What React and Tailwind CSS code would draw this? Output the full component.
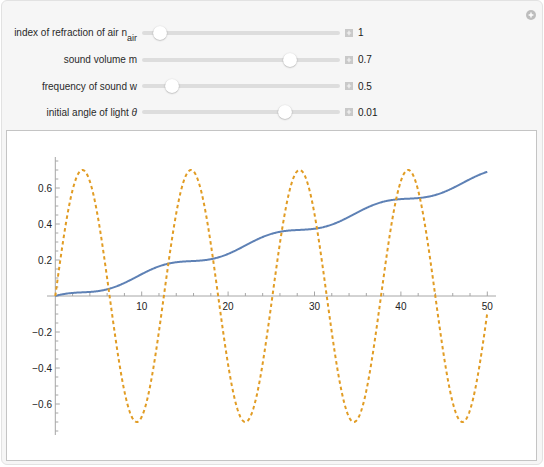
import React from "react";

const FONT = { fontFamily: '"Liberation Sans", Arial, sans-serif' };

function PlusSquare() {
  return (
    <div className="w-[8px] h-[8px] bg-[#c9c9c9] flex items-center justify-center">
      <svg width="8" height="8" viewBox="0 0 8 8">
        <path d="M4 1.8V6.2M1.8 4H6.2" stroke="#f4f4f4" strokeWidth="1.2" />
      </svg>
    </div>
  );
}

function Row({ label, value, thumb, h }) {
  return (
    <div className={`flex items-center pl-[9px] ${h}`}>
      <div className="w-[126px] text-right text-[10px] text-[#2a2a2a] whitespace-nowrap">{label}</div>
      <div className="relative ml-[5px] w-[198px] h-[4px] bg-[#dddddd] rounded-full">
        <div
          className="absolute top-[-5px] w-[14px] h-[14px] rounded-full bg-white shadow-[0_0.5px_1.5px_rgba(0,0,0,0.35)]"
          style={{ left: thumb - 7 }}
        />
      </div>
      <div className="ml-[5px]">
        <PlusSquare />
      </div>
      <div className="ml-[5px] text-[10px] text-[#1a1a1a]">{value}</div>
    </div>
  );
}

const X0 = 48.3;
const SX = 8.64;
const Y0 = 165;
const SY = 180;
const px = (x) => X0 + SX * x;
const py = (y) => Y0 - SY * y;

function buildPath(f, a, b, n) {
  let d = "";
  for (let i = 0; i <= n; i++) {
    const x = a + ((b - a) * i) / n;
    d += (i === 0 ? "M" : "L") + px(x).toFixed(2) + " " + py(f(x)).toFixed(2);
  }
  return d;
}

function Plot() {
  const orange = buildPath((x) => 0.7 * Math.sin(0.5 * x), 0, 50, 600);
  const a = 0.0138;
  const c = 0.0115;
  const blue = buildPath((x) => a * x + 2 * c * (Math.cos(0.5 * x) - 1), 0, 50, 600);
  const axis = "#a6a6a6";
  const xt = [];
  for (let v = 2; v <= 50; v += 2) {
    const major = v % 10 === 0;
    xt.push(
      <line key={"x" + v} x1={px(v)} x2={px(v)} y1={Y0} y2={Y0 - (major ? 4.5 : 3)} stroke={axis} strokeWidth="1" />
    );
  }
  const yt = [];
  for (let k = -15; k <= 15; k++) {
    if (k === 0) continue;
    const v = k * 0.05;
    const major = k % 4 === 0;
    yt.push(
      <line key={"y" + k} x1={X0} x2={X0 + (major ? 4.5 : 3)} y1={py(v)} y2={py(v)} stroke={axis} strokeWidth="1" />
    );
  }
  const ylabels = [0.6, 0.4, 0.2, -0.2, -0.4, -0.6];
  return (
    <svg width="529" height="329" viewBox="0 0 529 329" className="block">
      <line x1="40" x2="489" y1={Y0} y2={Y0} stroke={axis} strokeWidth="1" />
      <line x1={X0} x2={X0} y1="26" y2="304" stroke={axis} strokeWidth="1" />
      {xt}
      {yt}
      {[10, 20, 30, 40, 50].map((v) => (
        <text key={v} x={px(v)} y={Y0 + 10} textAnchor="middle" dominantBaseline="central" fontSize="10" fill="#222" style={FONT}>
          {v}
        </text>
      ))}
      {ylabels.map((v) => (
        <text key={v} x={45} y={py(v)} textAnchor="end" dominantBaseline="central" fontSize="10" fill="#222" style={FONT}>
          {v < 0 ? "\u2212" + Math.abs(v).toFixed(1) : v.toFixed(1)}
        </text>
      ))}
      <path d={blue} fill="none" stroke="#5e81b5" strokeWidth="2" strokeLinejoin="round" />
      <path d={orange} fill="none" stroke="#e19c24" strokeWidth="2" strokeDasharray="3.5 3" />
    </svg>
  );
}

export default function App() {
  return (
    <div className="w-[544px] h-[467px] bg-white" style={FONT}>
      <div className="relative ml-[1px] w-[542px] h-[465px] rounded-[6px] border border-[#e2e2e2] bg-[#f6f6f6]">
        <div className="absolute right-[6px] top-[9px] w-[10px] h-[10px] rounded-full bg-[#bdbdbd] flex items-center justify-center">
          <svg width="10" height="10" viewBox="0 0 10 10">
            <path d="M5 2.6V7.4M2.6 5H7.4" stroke="#fff" strokeWidth="1.4" />
          </svg>
        </div>
        <div className="pt-[18px]">
          <Row
            h="h-[27px]"
            thumb={17.7}
            value="1"
            label={
              <span>
                index of refraction of air n<sub className="text-[9px] align-[-3px]">air</sub>
              </span>
            }
          />
          <Row h="h-[27px]" thumb={148.3} value="0.7" label="sound volume m" />
          <Row h="h-[26px]" thumb={30.3} value="0.5" label="frequency of sound w" />
          <Row
            h="h-[26px]"
            thumb={143.3}
            value="0.01"
            label={
              <span>
                initial angle of light <i>θ</i>
              </span>
            }
          />
        </div>
        <div className="ml-[4px] mt-[5px] w-[531px] h-[331px] border border-[#c4c4c4] bg-white">
          <Plot />
        </div>
      </div>
    </div>
  );
}
